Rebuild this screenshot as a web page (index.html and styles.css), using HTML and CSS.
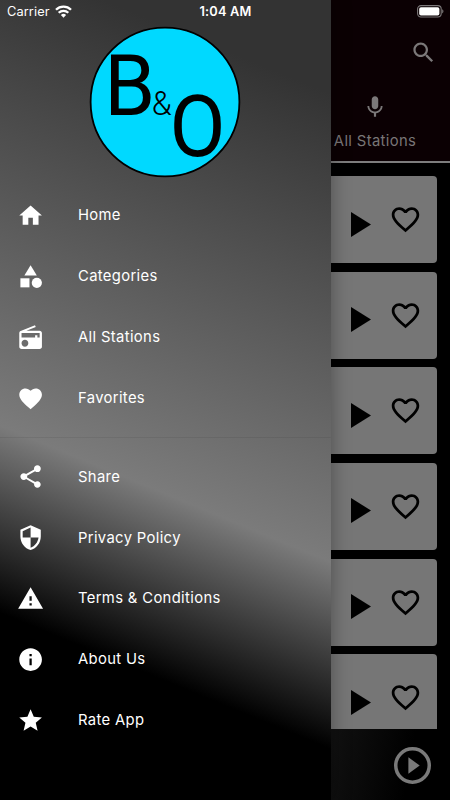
FILE: index.html
```
<!DOCTYPE html>
<html lang="en">
<head>
<meta charset="utf-8">
<title>B&amp;O Radio</title>
<link rel="stylesheet" href="styles.css">
</head>
<body>
<svg width="0" height="0" class="defs">
  <symbol id="play" viewBox="0 0 20 25"><path d="M0 0v25l20-12.5z"/></symbol>
  <symbol id="heart-o" viewBox="0 0 24 24"><path d="M16.5 3c-1.74 0-3.41.81-4.5 2.09C10.91 3.81 9.24 3 7.5 3 4.42 3 2 5.42 2 8.5c0 3.78 3.4 6.86 8.55 11.54L12 21.35l1.45-1.32C18.6 15.36 22 12.28 22 8.5 22 5.42 19.58 3 16.5 3zm-4.4 15.55l-.1.1-.1-.1C7.14 14.24 4 11.39 4 8.5 4 6.5 5.5 5 7.5 5c1.54 0 3.04.99 3.57 2.36h1.87C13.46 5.99 14.96 5 16.5 5c2 0 3.5 1.5 3.5 3.5 0 2.89-3.14 5.74-7.9 10.05z"/></symbol>
</svg>
<div class="screen">
  <main class="page">
    <header class="header">
      <svg class="search" viewBox="0 0 24 24"><path d="M15.5 14h-.79l-.28-.27C15.41 12.59 16 11.11 16 9.5 16 5.91 13.09 3 9.5 3S3 5.91 3 9.5 5.91 16 9.5 16c1.61 0 3.09-.59 4.23-1.57l.27.28v.79l5 4.99L20.49 19l-4.99-5zm-6 0C7.01 14 5 11.99 5 9.5S7.01 5 9.5 5 14 7.01 14 9.5 11.99 14 9.5 14z"/></svg>
      <div class="tab">
        <svg class="mic" viewBox="0 0 24 24"><path d="M12 14c1.66 0 2.99-1.34 2.99-3L15 5c0-1.66-1.34-3-3-3S9 3.34 9 5v6c0 1.66 1.34 3 3 3zm5.3-3c0 3-2.54 5.1-5.3 5.1S6.7 14 6.7 11H5c0 3.41 2.72 6.23 6 6.72V21h2v-3.28c3.28-.48 6-3.3 6-6.72h-1.7z"/></svg>
        <span class="tab-label">All Stations</span>
      </div>
    </header>
    <div class="list">
      <div class="card"><svg class="play"><use href="#play"/></svg><svg class="heart"><use href="#heart-o"/></svg></div>
      <div class="card"><svg class="play"><use href="#play"/></svg><svg class="heart"><use href="#heart-o"/></svg></div>
      <div class="card"><svg class="play"><use href="#play"/></svg><svg class="heart"><use href="#heart-o"/></svg></div>
      <div class="card"><svg class="play"><use href="#play"/></svg><svg class="heart"><use href="#heart-o"/></svg></div>
      <div class="card"><svg class="play"><use href="#play"/></svg><svg class="heart"><use href="#heart-o"/></svg></div>
      <div class="card"><svg class="play"><use href="#play"/></svg><svg class="heart"><use href="#heart-o"/></svg></div>
    </div>
    <footer class="player">
      <svg class="player-icon" viewBox="0 0 36 36"><circle cx="18" cy="18" r="16.3"/><path d="M14 10v16l11-8z"/></svg>
    </footer>
  </main>
  <nav class="drawer">
    <svg class="logo" viewBox="0 0 152 152">
      <circle cx="76" cy="76" r="74.4"/>
      <text class="big" x="15.2" y="88.5" textLength="51" lengthAdjust="spacingAndGlyphs">B</text>
      <text class="amp" x="62.7" y="88.5" textLength="20" lengthAdjust="spacingAndGlyphs">&amp;</text>
      <text class="big" x="80.5" y="129.8" textLength="56" lengthAdjust="spacingAndGlyphs">O</text>
    </svg>
    <a class="item"><svg viewBox="0 0 24 24"><path d="M10 20v-6h4v6h5v-8h3L12 3 2 12h3v8z"/></svg><span>Home</span></a>
    <a class="item"><svg viewBox="0 0 24 24"><path d="M12 2l-5.5 9h11z"/><circle cx="17.5" cy="17.5" r="4.5"/><path d="M3 13.5h8v8H3z"/></svg><span>Categories</span></a>
    <a class="item"><svg viewBox="0 0 24 24"><path d="M3.24 6.15C2.51 6.43 2 7.17 2 8v12c0 1.1.89 2 2 2h16c1.11 0 2-.9 2-2V8c0-1.11-.89-2-2-2H8.3l8.26-3.34L15.88 1 3.24 6.15zM7 20c-1.66 0-3-1.34-3-3s1.34-3 3-3 3 1.34 3 3-1.34 3-3 3zm13-8h-2v-2h-2v2H4V8h16v4z"/></svg><span>All Stations</span></a>
    <a class="item"><svg viewBox="0 0 24 24"><path d="M12 21.35l-1.45-1.32C5.4 15.36 2 12.28 2 8.5 2 5.42 4.42 3 7.5 3c1.74 0 3.41.81 4.5 2.09C13.09 3.81 14.76 3 16.5 3 19.58 3 22 5.42 22 8.5c0 3.78-3.4 6.86-8.55 11.54L12 21.35z"/></svg><span>Favorites</span></a>
    <div class="divider"></div>
    <a class="item"><svg viewBox="0 0 24 24"><path d="M18 16.08c-.76 0-1.44.3-1.96.77L8.91 12.7c.05-.23.09-.46.09-.7s-.04-.47-.09-.7l7.05-4.11c.54.5 1.25.81 2.04.81 1.66 0 3-1.34 3-3s-1.34-3-3-3-3 1.34-3 3c0 .24.04.47.09.7L8.04 9.81C7.5 9.31 6.79 9 6 9c-1.66 0-3 1.34-3 3s1.34 3 3 3c.79 0 1.5-.31 2.04-.81l7.12 4.16c-.05.21-.08.43-.08.65 0 1.61 1.31 2.92 2.92 2.92s2.92-1.31 2.92-2.92-1.31-2.92-2.92-2.92z"/></svg><span>Share</span></a>
    <a class="item"><svg viewBox="0 0 24 24"><path d="M12 1L3 5v6c0 5.55 3.84 10.74 9 12 5.16-1.26 9-6.45 9-12V5l-9-4zm0 10.99h7c-.53 4.12-3.28 7.79-7 8.94V12H5V6.3l7-3.11v8.8z"/></svg><span>Privacy Policy</span></a>
    <a class="item"><svg viewBox="0 0 24 24"><path d="M1 21h22L12 2 1 21zm12-3h-2v-2h2v2zm0-4h-2v-4h2v4z"/></svg><span>Terms &amp; Conditions</span></a>
    <a class="item"><svg viewBox="0 0 24 24"><path d="M12 2C6.48 2 2 6.48 2 12s4.48 10 10 10 10-4.48 10-10S17.52 2 12 2zm1 15h-2v-6h2v6zm0-8h-2V7h2v2z"/></svg><span>About Us</span></a>
    <a class="item"><svg viewBox="0 0 24 24"><path d="M12 17.27L18.18 21l-1.64-7.03L22 9.24l-7.19-.61L12 2 9.19 8.63 2 9.24l5.46 4.73L5.82 21z"/></svg><span>Rate App</span></a>
  </nav>
  <div class="status">
    <div class="network">
      <span class="carrier">Carrier</span>
      <svg class="wifi" viewBox="0 0 17 13"><g fill="none" stroke="#fff" stroke-width="2.3"><path d="M1 4.8a10.6 10.6 0 0 1 15 0"/><path d="M3.7 7.8a6.8 6.8 0 0 1 9.6 0"/></g><path fill="#fff" d="M8.5 12.7L5.9 10a3.7 3.7 0 0 1 5.2 0z"/></svg>
    </div>
    <span class="time">1:04 AM</span>
    <svg class="battery" viewBox="0 0 27 13"><rect x=".6" y=".6" width="23.6" height="11.4" rx="3.4" fill="none" stroke="#7d797b" stroke-width="1.1"/><rect x="2.2" y="2.2" width="20.2" height="8.4" rx="1.8" fill="#fff"/><path d="M25.2 4.3c1.7.7 1.7 3.4 0 4.1z" fill="#7d797b"/></svg>
  </div>
</div>
</body>
</html>
```
FILE: styles.css
```
body {
  margin: 0;
  background: #000;
  font-family: Inter, "Liberation Sans", sans-serif;
}
.defs { position: absolute; }
.screen {
  position: relative;
  width: 450px;
  height: 800px;
  overflow: hidden;
}
.page {
  display: flex;
  flex-direction: column;
  height: 800px;
}
.header {
  box-sizing: border-box;
  flex: none;
  height: 163px;
  padding: 39px 13px 0 0;
  display: flex;
  flex-direction: column;
  align-items: flex-end;
  background: #0b0003;
  border-bottom: 2px solid #7d7d7d;
}
.header svg { fill: #7b7879; }
.search { width: 27px; height: 27px; }
.tab {
  display: flex;
  flex-direction: column;
  align-items: center;
  width: 124px;
  margin-top: 28px;
}
.mic { width: 26px; height: 26px; }
.tab-label {
  margin-top: 12px;
  font-size: 14.8px;
  line-height: 18px;
  letter-spacing: .35px;
  color: #797677;
}
.list {
  flex: 1;
  min-height: 0;
  overflow: hidden;
  padding: 13px 13px 0;
}
.card {
  box-sizing: border-box;
  height: 87.2px;
  margin-bottom: 8.45px;
  padding-right: 15px;
  display: flex;
  align-items: center;
  justify-content: flex-end;
  gap: 18.5px;
  border-radius: 4px;
  background: #767676;
}
.play { width: 20px; height: 25px; margin-top: 9px; }
.heart { width: 33px; height: 33px; }
.player {
  flex: none;
  height: 71px;
  box-sizing: border-box;
  padding: 1px 19.5px 0 0;
  display: flex;
  align-items: center;
  justify-content: flex-end;
  background: linear-gradient(100deg, #111 72%, #000 90%);
}
.player-icon { width: 37px; height: 37px; fill: #7a7a7a; }
.player-icon circle { fill: none; stroke: #7a7a7a; stroke-width: 3.4; }
.drawer {
  position: absolute;
  top: 0;
  left: 0;
  box-sizing: border-box;
  width: 330.5px;
  height: 800px;
  padding-top: 26px;
  background: linear-gradient(202.4deg, #333 10%, #7b7b7b 60%, #000 80%);
  box-shadow: 0 0 18px rgba(0, 0, 0, .35);
}
.logo {
  display: block;
  width: 152px;
  height: 152px;
  margin: 0 auto 7px;
}
.logo circle { fill: #00d9ff; stroke: #000; stroke-width: 1.8; }
.big { font: 400 85px Roboto, sans-serif; }
.amp { font: 300 33px Roboto, sans-serif; }
.item {
  display: flex;
  align-items: center;
  height: 60.95px;
  padding-left: 17px;
  color: #fff;
  font-size: 14.8px;
  letter-spacing: .35px;
}
.item svg { width: 27.2px; height: 27.2px; margin-right: 33.8px; fill: #fff; }
.divider {
  height: 17.4px;
  background: linear-gradient(rgba(0, 0, 0, .07), rgba(0, 0, 0, .07)) center / 100% 1px no-repeat;
}
.status {
  position: absolute;
  top: 0;
  left: 0;
  box-sizing: border-box;
  width: 450px;
  height: 22px;
  padding: 0 6px 0 7px;
  display: grid;
  grid-template-columns: 1fr auto 1fr;
  align-items: center;
  color: #fff;
  font-size: 12.8px;
}
.network { display: flex; align-items: center; }
.carrier { letter-spacing: .1px; }
.wifi { width: 17px; height: 13px; margin-left: 5px; }
.time { font-weight: 600; letter-spacing: .2px; }
.battery { width: 27px; height: 13px; justify-self: end; }
```
